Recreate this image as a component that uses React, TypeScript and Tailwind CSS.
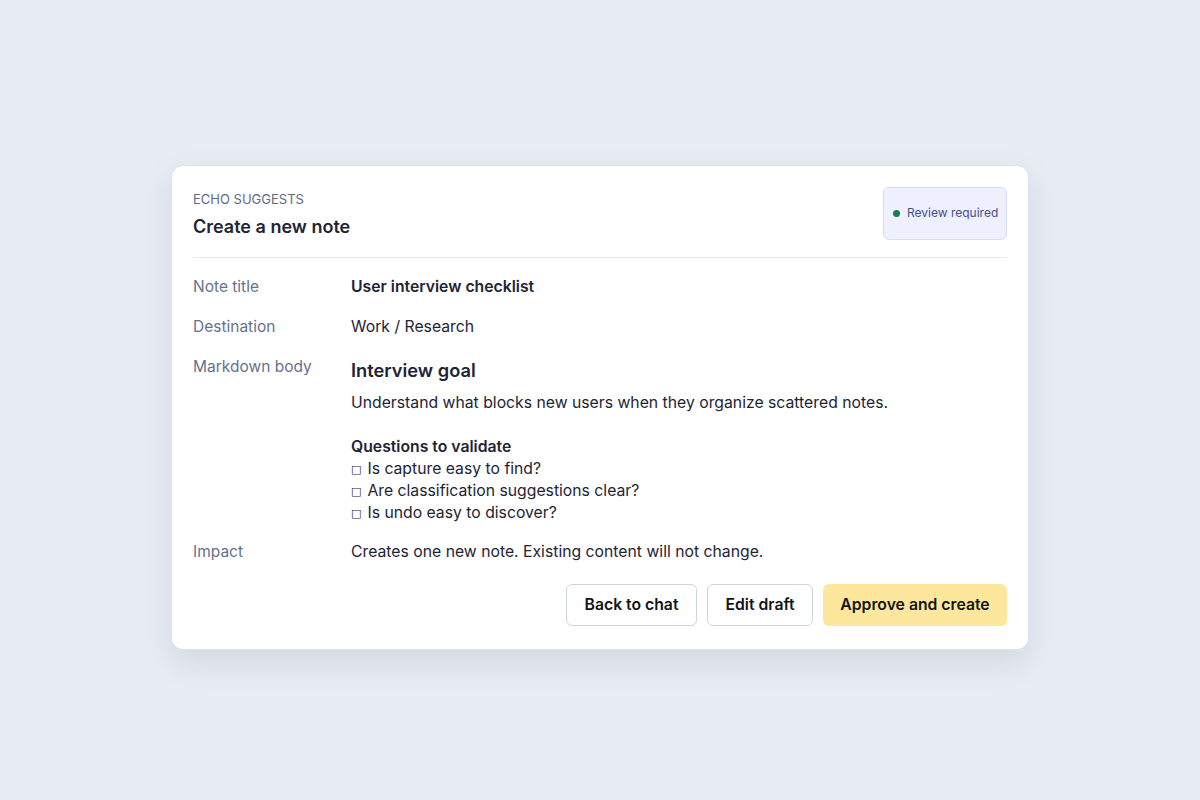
export default function App() {
  const rows = [
    { label: "Note title", value: <span className="font-semibold text-[#1e2433]">User interview checklist</span> },
    { label: "Destination", value: <span>Work / Research</span> },
  ];
  const checks = ["Is capture easy to find?", "Are classification suggestions clear?", "Is undo easy to discover?"];

  return (
    <main
      className="flex min-h-screen items-center justify-center bg-[#e8ecf4] pt-[14px] text-[#1e2433]"
      style={{ fontFamily: "Inter, 'Noto Sans', 'Liberation Sans', sans-serif" }}
    >
      <section className="w-[858px] rounded-xl border border-[#dde3ec] bg-white px-[21px] pt-[21px] pb-[23px] shadow-[0_12px_32px_rgba(30,41,59,0.10)]">
        {/* header */}
        <header className="flex items-start justify-between border-b border-[#e6eaf0] pb-[17px]">
          <div className="pt-[4px]">
            <p className="text-[13px] uppercase leading-4 text-[#5f6b82]">Echo suggests</p>
            <h1 className="mt-[8px] text-[18px] font-semibold leading-6 text-[#1e2433]">Create a new note</h1>
          </div>
          <div className="flex h-[53px] w-[124px] items-center gap-[7px] rounded-md border border-[#d8ddf3] bg-[#eef0fe] pl-[9px] text-[12px] text-[#454c94]">
            <span className="h-[7px] w-[7px] rounded-full bg-[#1e7a52]" />
            Review required
          </div>
        </header>

        {/* details */}
        <dl className="mt-[17px] flex flex-col gap-4 text-[15.75px] leading-6">
          {rows.map((r) => (
            <div key={r.label} className="flex">
              <dt className="w-[158px] shrink-0 text-[15.5px] text-[#66728a]">{r.label}</dt>
              <dd>{r.value}</dd>
            </div>
          ))}
          <div className="flex">
            <dt className="w-[158px] shrink-0 text-[15.5px] text-[#66728a]">Markdown body</dt>
            <dd>
              <h2 className="text-[18.25px] font-semibold leading-[30px] text-[#1e2433]">Interview goal</h2>
              <p className="mt-[6px] leading-6">Understand what blocks new users when they organize scattered notes.</p>
              <div className="mt-[21px] leading-[22px]">
                <p className="font-semibold">Questions to validate</p>
                {checks.map((c) => (
                  <p key={c} className="h-[22px]">
                    <span className="mr-[6px] inline-block align-[1px] text-[11px] leading-none font-['DejaVu_Sans',sans-serif]">□</span>
                    {c}
                  </p>
                ))}
              </div>
            </dd>
          </div>
          <div className="flex">
            <dt className="w-[158px] shrink-0 text-[15.5px] text-[#66728a]">Impact</dt>
            <dd>Creates one new note. Existing content will not change.</dd>
          </div>
        </dl>

        {/* actions */}
        <div className="mt-5 flex justify-end gap-[10px] text-[15.75px] font-semibold text-[#111318]">
          <button className="h-[42px] w-[131px] rounded-md border border-[#cdd5df] bg-white">Back to chat</button>
          <button className="h-[42px] w-[106px] rounded-md border border-[#cdd5df] bg-white">Edit draft</button>
          <button className="h-[42px] w-[184px] rounded-md bg-[#fde79c]">Approve and create</button>
        </div>
      </section>
    </main>
  );
}
